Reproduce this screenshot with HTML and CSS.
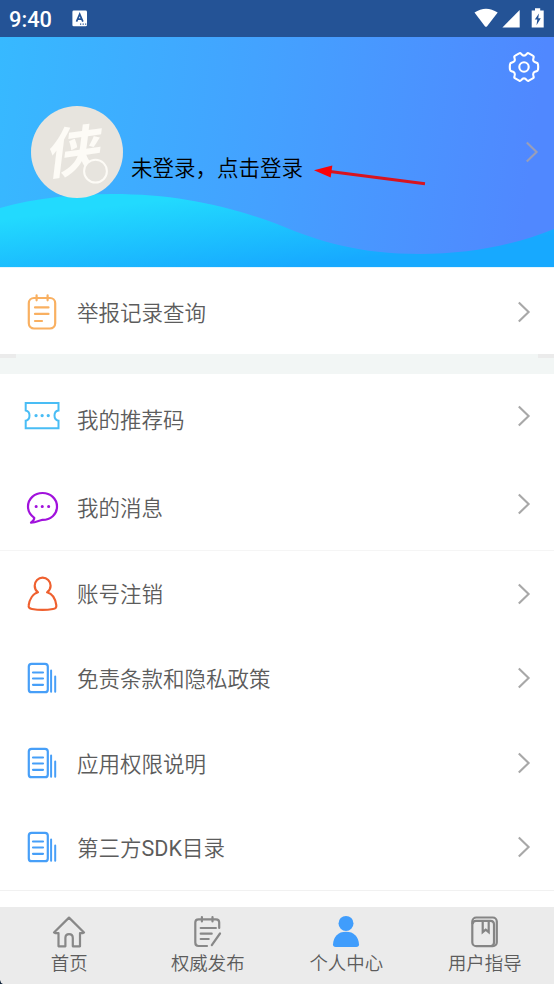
FILE: index.html
```html
<!DOCTYPE html>
<html lang="zh-CN">
<head>
<meta charset="utf-8">
<title>个人中心</title>
<link rel="stylesheet" href="styles.css">
</head>
<body>
<svg class="defs" width="0" height="0">
  <symbol id="chevron" viewBox="0 0 14 22"><path d="M1.8 1.5 L11.6 11 L1.8 20.5" fill="none" stroke="currentColor" stroke-width="2.1"/></symbol>
  <symbol id="doc" viewBox="0 0 36 36"><g fill="none" stroke="#479ff8" stroke-width="2.2" stroke-linecap="round"><rect x="4.8" y="3.8" width="19" height="28.4" rx="2.8"/><path d="M9 12.5h10M9 18.5h10M9 24.8h10"/><path d="M27.1 10.4v21.4M31.2 16.4v15.4" stroke-width="2"/></g></symbol>
</svg>
<div class="app">
  <header class="status">
    <span class="clock">9:40</span>
    <svg class="ime" width="16" height="17" viewBox="0 0 16 17"><rect x=".4" y=".5" width="14.6" height="15.8" rx="1.4" fill="#fff"/><path d="M4.5 11.6 7.7 4.2 10.9 11.6M5.8 9.2h3.8" fill="none" stroke="#245396" stroke-width="1.7"/><path d="M8 14.2h1.2M10.6 14.2h1.2M13.1 14.2h1.2" stroke="#245396" stroke-width="1.2"/></svg>
    <svg class="signals" width="72" height="22" viewBox="0 0 72 22"><g fill="#fff"><path d="M.5 5.6C8 .3 16 .3 23.7 5.6L13.1 19.2Q12 20.4 10.9 19.2Z"/><path d="M28.4 20.5 45.7 3v17.5z"/><path d="M57.7 3.6H61V1.2h5.2v2.4h3.5v16.9h-12z"/></g><path d="m64.9 6.5-4.1 6h2.5l-.8 5.7 4.3-7h-2.5z" fill="#245396"/></svg>
  </header>

  <section class="hero">
    <svg class="wave" width="554" height="230" viewBox="0 0 554 230">
      <defs><linearGradient id="sea" gradientUnits="userSpaceOnUse" x1="160" y1="163" x2="170" y2="245"><stop offset="0" stop-color="#22dafe"/><stop offset="1" stop-color="#17a9ff"/></linearGradient></defs>
      <path d="M0 171C35 161 75 157 112 157C175 157 225 168 277 187C320 205 360 217 420 217C470 217 515 208 554 192V230H0Z" fill="url(#sea)"/>
    </svg>
    <svg class="gear" width="32" height="32" viewBox="0 0 32 32" fill="none" stroke="#fff" stroke-width="2.1" stroke-linejoin="round"><path d="M11.2 2.4 Q12.2 1.6 13.2 2.8 Q16 6.5 18.8 2.8 Q19.8 1.6 20.8 2.4 L24.8 4.6 Q26.2 5.3 25.5 6.8 Q24.1 11 28.2 11.6 Q29.8 11.8 30 13.3 Q30.4 16 30 18.7 Q29.8 20.2 28.2 20.4 Q24.1 21 25.5 25.2 Q26.2 26.7 24.8 27.4 L20.8 29.6 Q19.8 30.4 18.8 29.2 Q16 25.5 13.2 29.2 Q12.2 30.4 11.2 29.6 L7.2 27.4 Q5.8 26.7 6.5 25.2 Q7.9 21 3.8 20.4 Q2.2 20.2 2 18.7 Q1.6 16 2 13.3 Q2.2 11.8 3.8 11.6 Q7.9 11 6.5 6.8 Q5.8 5.3 7.2 4.6Z"/><circle cx="16" cy="16" r="4.7"/></svg>
    <div class="profile">
      <svg class="avatar" width="92" height="92" viewBox="0 0 92 92"><circle cx="46" cy="46" r="46" fill="#e7e4de"/><text class="seal" transform="translate(15 69) skewY(-8) skewX(-7)">侠</text><circle cx="64.5" cy="65.2" r="11.4" fill="#e7e4de" stroke="#fdfbf6" stroke-width="2"/></svg>
      <span class="login">未登录，点击登录</span>
      <svg class="go" width="14" height="22"><use href="#chevron"/></svg>
    </div>
    <svg class="pointer" width="114" height="26" viewBox="0 0 114 26"><path d="M16 6.5 111 18.8" stroke="#d8141f" stroke-width="3"/><path d="M0 5.2 18.3 .5 16.7 12.5Z" fill="#fb0207"/></svg>
  </section>

  <main>
    <div class="group first">
      <div class="row">
        <svg width="36" height="36" viewBox="0 0 36 36" fill="none" stroke="#f9b061" stroke-width="2.2" stroke-linecap="round"><rect x="4.8" y="4" width="26.4" height="30.5" rx="5.2"/><path d="M12.6 1.3v5M23.6 1.3v5M11 13.4h13.5M11 19.9h13.5M11 27h7"/></svg>
        <span class="label">举报记录查询</span><svg class="arrow" width="14" height="22"><use href="#chevron"/></svg>
      </div>
    </div>
    <div class="band"></div>
    <div class="group roomy">
      <div class="row">
        <svg width="36" height="36" viewBox="0 0 36 36" fill="none" stroke="#49bdf5" stroke-width="2"><path d="M1.7 5.1h32.8v7.4c-3 .4-4 2.5-4 5.1s1 4.7 4 5.1v7.5H1.7V22.7c2.6-.4 3.8-2.5 3.8-5.1s-1.2-4.7-3.8-5.1Z"/><path d="M12 17.6h.1M18.1 17.6h.1M24.2 17.6h.1" stroke-width="3.2" stroke-linecap="round"/></svg>
        <span class="label">我的推荐码</span><svg class="arrow" width="14" height="22"><use href="#chevron"/></svg>
      </div>
      <div class="row message">
        <svg width="36" height="36" viewBox="0 0 36 36" fill="none" stroke="#a112dc" stroke-width="2.2" stroke-linejoin="round"><path d="M10.3 28.8C6.3 26 4 22.2 4 17.6 4 9.7 10.5 4 18.5 4S33 9.7 33 17.6 26.5 30.9 18.5 30.9C15 31.4 12 33.8 7 33.7 9.5 31.8 10.3 30.5 10.3 28.8Z"/><path d="M12.1 17.5h.1M18.2 17.5h.1M24.6 17.5h.1" stroke-width="3" stroke-linecap="round"/></svg>
        <span class="label">我的消息</span><svg class="arrow" width="14" height="22"><use href="#chevron"/></svg>
      </div>
    </div>
    <div class="group last">
      <div class="row account">
        <svg width="36" height="36" viewBox="0 0 36 36" fill="none" stroke="#ef602f" stroke-width="2.2" stroke-linejoin="round"><path transform="translate(0 -1)" d="M14 17.3C11.9 15.7 10.7 13.5 10.7 10.7 10.7 6 14.3 2.7 18.6 2.7S26.6 6 26.6 10.7C26.6 13.5 25.2 15.7 23.1 17.3 28.5 18.8 31.5 24.5 32.3 30.2 32.7 32.8 31.2 33.7 29 34 22 35.2 15 35.2 8 34 5.5 33.6 4.3 32.5 4.7 30.2 5.5 24.8 8.6 18.8 14 17.3Z"/></svg>
        <span class="label">账号注销</span><svg class="arrow" width="14" height="22"><use href="#chevron"/></svg>
      </div>
      <div class="row"><svg width="36" height="36"><use href="#doc"/></svg><span class="label">免责条款和隐私政策</span><svg class="arrow" width="14" height="22"><use href="#chevron"/></svg></div>
      <div class="row"><svg width="36" height="36"><use href="#doc"/></svg><span class="label">应用权限说明</span><svg class="arrow" width="14" height="22"><use href="#chevron"/></svg></div>
      <div class="row sdk"><svg width="36" height="36"><use href="#doc"/></svg><span class="label">第三方<span class="latin">SDK</span>目录</span><svg class="arrow" width="14" height="22"><use href="#chevron"/></svg></div>
    </div>
  </main>

  <nav class="tabs">
    <div class="tab"><svg width="34" height="34" viewBox="0 0 34 34" fill="none" stroke="#888" stroke-width="2.2" stroke-linejoin="round"><path d="M2 17.5 17 2.6 32 17.5 30.5 18.2H28V31.3H20.8V23C20.8 17.9 13.4 17.9 13.4 23V31.3H6.5V18.2H3.6Z"/></svg><span>首页</span></div>
    <div class="tab"><svg width="34" height="34" viewBox="0 0 34 34" fill="none" stroke="#888" stroke-width="2.2" stroke-linecap="round"><path d="M28.2 13V7.5Q28.2 4.3 25 4.3H7.5Q4.3 4.3 4.3 7.5V27.5Q4.3 31 7.5 31H16M10.9 2v4.5M21.5 2v4.5M9.7 13h15.2M9.7 18.7h11M9.7 24h8M29 18.5 20.8 30.2"/></svg><span>权威发布</span></div>
    <div class="tab"><svg width="34" height="34" viewBox="0 0 34 34" fill="#409dfc"><circle cx="17" cy="8.4" r="7.5"/><path d="M4 29.3C4.6 21.5 9 16.7 17 16.7S29.4 21.5 30 29.3Q30.1 32 27.2 32H6.7Q3.9 32 4 29.3Z"/></svg><span>个人中心</span></div>
    <div class="tab"><svg width="34" height="34" viewBox="0 0 34 34" fill="none" stroke="#858585" stroke-width="2.2"><rect x="4.3" y="2.5" width="24.5" height="28.7" rx="4"/><path d="M4.5 9Q5 5.8 8 5.8H22.5Q26 5.8 26 9.5V27.5Q26 30.8 23 31M14.7 6v11.2l3-2.5 3 2.5V6"/></svg><span>用户指导</span></div>
  </nav>
  <svg class="corner" width="4" height="4" viewBox="0 0 4 4"><path d="M0 0Q.5 3 3 4H0Z" fill="#10233a"/></svg>
</div>
</body>
</html>
```
FILE: styles.css
```css
* { box-sizing: border-box; }
body { margin: 0; background: #fff; font-family: Roboto, "Noto Sans CJK SC", sans-serif; }
svg { display: block; flex: none; }
.defs { position: absolute; }
.app { position: relative; width: 554px; height: 984px; display: flex; flex-direction: column; overflow: hidden; }

.status { height: 37px; flex: none; display: flex; align-items: center; padding: 0 9px; background: #245396; color: #fff; }
.clock { width: 63px; font-size: 21.8px; font-weight: 500; line-height: 37px; padding-top: 1px; }
.signals { margin-left: auto; margin-right: -1px; margin-bottom: 1px; }

.hero { position: relative; height: 230px; flex: none; background: linear-gradient(97deg, #37b9ff 0%, #44a1ff 48%, #5088ff 94%); }
.wave { position: absolute; left: 0; top: 0; }
.gear { position: absolute; right: 14px; top: 14px; }
.profile { position: relative; display: flex; align-items: center; padding: 69px 15px 0 31px; }
.avatar { overflow: visible; }
.seal { font-family: "Noto Sans CJK SC", sans-serif; font-size: 54px; font-weight: 700; fill: #fdfbf6; }
.login { margin: 29px auto 0 8px; color: #000; font-family: "Noto Sans CJK SC", sans-serif; font-size: 21.5px; font-weight: 350; line-height: 30px; white-space: nowrap; }
.go { color: #999eb8; }
.pointer { position: absolute; left: 314px; top: 128px; }

.group { background: #fff; }
.first { height: 87px; border-top: 1px solid #e3f5ff; }
.first .row { height: 87px; }
.band { height: 20px; background: linear-gradient(#ebebeb, #ebebeb) 0 0 / 16px 4px no-repeat, linear-gradient(#ebebeb, #ebebeb) 100% 0 / 16px 4px no-repeat, #f2f6f5; }
.row { display: flex; align-items: center; height: 84.5px; padding: 0 23px 0 24px; }
.label { margin-left: 17px; color: #5c5c5c; font-family: "Noto Sans CJK SC", sans-serif; font-size: 21.5px; font-weight: 350; line-height: 32px; white-space: nowrap; }
.latin { font-family: Roboto, sans-serif; font-weight: 400; }
.arrow { margin-left: auto; color: #a8a8a8; }
.roomy { height: 177px; border-bottom: 1px solid #f5f5f5; }
.roomy .row { height: 84px; }
.roomy .row.message { height: 92px; }
.roomy .label { padding-top: 6px; }
.message > svg:first-child { margin-top: 6px; }
.last { height: 340px; border-bottom: 1px solid #f1f1f1; }
.account { height: 85px; }
.account .label { padding-bottom: 1px; }
.sdk .label { padding-top: 2px; }

.tabs { display: flex; height: 77px; flex: none; margin-top: auto; background: #ebebeb; }
.tab { flex: 1; display: flex; flex-direction: column; align-items: center; padding-top: 8px; color: #5c5c5c; font-family: "Noto Sans CJK SC", sans-serif; font-size: 18.4px; font-weight: 350; line-height: 26px; }
.tab span { margin-top: 0; }
.corner { position: absolute; left: 0; bottom: 0; }
```
